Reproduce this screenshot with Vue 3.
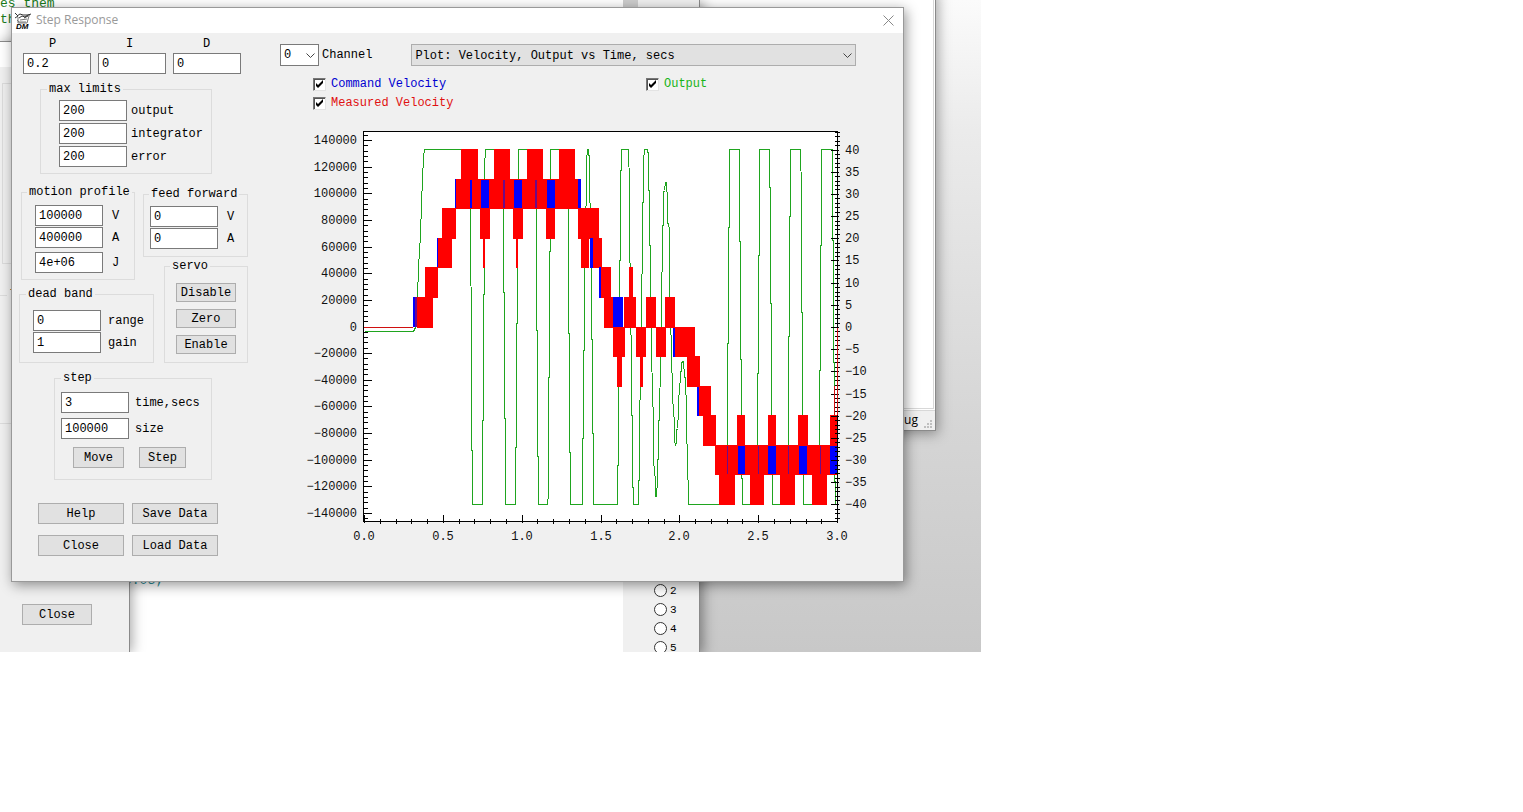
<script setup>
import { ref } from 'vue'

const gains = ref([
  { id: 'gain-p', label: 'P', value: '0.2' },
  { id: 'gain-i', label: 'I', value: '0' },
  { id: 'gain-d', label: 'D', value: '0' },
])
const limits = ref([
  { id: 'lim-out', label: 'output', value: '200' },
  { id: 'lim-int', label: 'integrator', value: '200' },
  { id: 'lim-err', label: 'error', value: '200' },
])
const profile = ref([
  { id: 'mp-v', label: 'V', value: '100000' },
  { id: 'mp-a', label: 'A', value: '400000' },
  { id: 'mp-j', label: 'J', value: '4e+06' },
])
const feed = ref([
  { id: 'ff-v', label: 'V', value: '0' },
  { id: 'ff-a', label: 'A', value: '0' },
])
const deadBand = ref([
  { id: 'db-range', label: 'range', value: '0' },
  { id: 'db-gain', label: 'gain', value: '1' },
])
const step = ref([
  { id: 'st-time', label: 'time,secs', value: '3' },
  { id: 'st-size', label: 'size', value: '100000' },
])
const traces = ref([
  { id: 'tr-cmd', label: 'Command Velocity', tone: 'blue', on: true },
  { id: 'tr-out', label: 'Output', tone: 'green', on: true },
  { id: 'tr-meas', label: 'Measured Velocity', tone: 'red', on: true },
])
const channels = [2, 3, 4, 5]

// Plot frame, in drawing units
const L = 363, R = 837, T = 131, B = 521
const velY = (v) => Math.round(326.5 - (v * 26.64) / 20000)
const outY = (v) => Math.round(327 - v * 4.436)
const timeX = (t) => Math.round(364 + t * 157.7)
const minus = (n) => String(n).replace('-', '−')

const leftTicks = []
for (let v = -144000; v <= 144000; v += 4000) {
  leftTicks.push({ y: velY(v), major: v % 20000 === 0, label: minus(v) })
}
const rightTicks = []
for (let v = -43; v <= 44; v++) {
  rightTicks.push({ y: outY(v), major: v % 5 === 0 && Math.abs(v) <= 40, label: minus(v) })
}
const bottomTicks = []
for (let i = 0; i <= 30; i++) {
  bottomTicks.push({ x: timeX(i / 10), major: i % 5 === 0, label: (i / 10).toFixed(1) })
}

// [x0, x1, y0, y1]
const measured = [
  [364, 413, 327, 328],
  [417, 433, 297, 328], [425, 438, 267, 298], [438, 452, 238, 268], [442, 456, 208, 239],
  [456, 581, 179, 209],
  [461, 478, 149, 179], [494, 510, 149, 179], [527, 543, 149, 179], [559, 575, 149, 179],
  [480, 490, 208, 239], [513, 523, 208, 239], [546, 555, 208, 239], [578, 599, 208, 239],
  [483, 485, 239, 268], [516, 518, 239, 268],
  [581, 589, 238, 268], [593, 602, 238, 268], [601, 611, 267, 298],
  [604, 613, 297, 328], [624, 636, 297, 328], [629, 633, 267, 297], [646, 656, 297, 328], [665, 675, 297, 328],
  [613, 625, 327, 357], [636, 646, 327, 357], [656, 666, 327, 357], [675, 695, 327, 357],
  [617, 622, 357, 387], [640, 643, 357, 387], [687, 700, 356, 387],
  [699, 711, 386, 416], [703, 716, 415, 446], [715, 837, 445, 475],
  [719, 735, 474, 505], [750, 764, 474, 505], [780, 795, 474, 505], [812, 827, 474, 505],
  [737, 745, 415, 445], [768, 776, 415, 445], [798, 808, 415, 445], [830, 837, 415, 445],
]
const command = [
  [413, 415, 297, 327], [437, 438, 238, 267], [455, 456, 179, 208],
  [470, 472, 180, 208], [481, 489, 180, 208], [514, 522, 180, 208], [547, 555, 180, 208], [578, 581, 179, 208],
  [590, 593, 238, 268], [599, 601, 267, 298], [613, 623, 297, 327], [673, 675, 328, 357], [697, 699, 387, 416],
  [738, 745, 446, 474], [768, 776, 446, 474], [799, 807, 446, 474], [830, 837, 446, 474],
]
const mixed = [
  [415, 417, 297, 327], [503, 505, 180, 208], [535, 537, 180, 208],
  [727, 728, 446, 474], [758, 759, 446, 474], [788, 789, 446, 474], [820, 821, 446, 474],
]
const output = [
  [364, 331], [413, 331], [415, 327], [417, 297], [418, 267], [420, 235], [421, 203], [422, 179], [423, 157], [424, 149],
  [470, 149], [470, 240], [471, 330], [471, 450], [472, 450], [472, 504], [482, 504], [482, 420], [483, 420], [483, 294], [484, 294], [484, 166], [485, 149],
  [503, 149], [503, 292], [504, 292], [504, 418], [505, 418], [505, 504], [515, 504], [515, 447], [516, 447], [516, 323], [517, 323], [518, 149],
  [536, 149], [536, 330], [537, 330], [537, 456], [538, 456], [538, 504], [547, 504], [548, 493], [548, 377], [549, 377], [549, 251], [550, 251], [550, 149],
  [568, 149], [568, 333], [569, 333], [569, 452], [570, 452], [570, 504], [582, 504], [582, 438], [583, 438], [583, 350], [584, 350], [584, 268], [585, 208],
  [586, 203], [586, 160], [587, 149], [588, 149], [588, 155], [589, 155], [589, 195], [590, 210], [591, 268], [591, 339], [592, 339], [592, 433], [593, 433], [593, 504],
  [617, 504], [617, 465], [618, 465], [618, 387], [619, 297], [619, 260], [620, 260], [620, 170], [621, 170], [621, 149], [628, 149], [629, 184], [629, 260],
  [630, 265], [630, 330], [631, 338], [631, 415], [632, 415], [632, 487], [633, 487], [633, 504], [638, 504], [638, 480], [639, 480], [639, 413], [640, 387],
  [641, 275], [642, 272], [642, 202], [643, 202], [643, 160], [644, 149], [647, 149], [648, 155], [648, 190], [649, 190], [649, 245], [650, 245], [650, 300],
  [651, 350], [652, 393], [653, 420], [653, 460], [655, 480], [655, 496], [656, 496], [657, 480], [657, 460], [658, 458], [658, 420], [659, 420], [660, 357],
  [661, 310], [661, 272], [662, 271], [662, 225], [663, 225], [663, 192], [664, 190], [665, 182], [666, 182], [666, 190], [667, 193], [667, 223], [668, 223],
  [669, 230], [669, 300], [670, 330], [671, 338], [671, 372], [672, 373], [672, 403], [673, 404], [674, 429], [674, 441], [675, 444], [676, 442], [676, 430],
  [677, 428], [678, 412], [678, 395], [679, 394], [680, 372], [681, 370], [681, 363], [682, 361], [683, 361], [684, 376], [685, 378], [686, 410], [686, 443], [687, 444],
  [687, 479], [688, 480], [688, 504], [727, 504], [727, 343], [728, 343], [728, 227], [729, 227], [729, 149], [739, 149], [739, 241], [740, 241], [740, 359],
  [741, 359], [741, 476], [742, 480], [742, 504], [757, 504], [757, 373], [758, 373], [758, 255], [759, 255], [759, 149], [769, 149], [769, 187], [770, 187],
  [770, 303], [771, 303], [771, 445], [772, 476], [772, 504], [788, 504], [788, 336], [789, 336], [789, 216], [790, 216], [790, 149], [800, 149], [801, 192],
  [801, 312], [802, 312], [802, 445], [803, 476], [803, 504], [819, 504], [819, 370], [820, 370], [820, 245], [821, 245], [821, 149], [832, 149], [832, 240],
  [833, 240], [833, 362], [834, 362], [834, 480], [835, 482], [835, 504],
].map((p) => p.join(',')).join(' ')
</script>

<template>
  <main class="desktop">
    <section class="win viewer" aria-label="Viewer">
      <div class="viewer-page"></div>
      <footer class="status">
        <span>Debug</span>
        <svg class="grip" viewBox="0 0 9 9" aria-hidden="true">
          <path d="M6 0h2v2H6zM3 3h2v2H3zM6 3h2v2H6zM0 6h2v2H0zM3 6h2v2H3zM6 6h2v2H6z" fill="#bfbfbf" />
        </svg>
      </footer>
    </section>

    <section class="win editor" aria-label="Editor">
      <div class="code">
        <p class="comment">es them</p>
        <p class="comment">th</p>
        <p class="value">0.03;</p>
      </div>
      <div class="side">
        <div class="scroll"></div>
        <div class="channels">
          <label v-for="c in channels" :key="c" class="radio">
            <input type="radio" name="axis" :value="c" />{{ c }}
          </label>
        </div>
      </div>
    </section>

    <section class="win tool" aria-label="Tool window">
      <div class="tool-title"></div>
      <div class="ghost ghost-a"></div>
      <div class="ghost ghost-b"><span>l</span></div>
      <button type="button" class="btn tool-close">Close</button>
    </section>

    <section class="win dialog" aria-label="Step Response">
      <header class="title">
        <svg class="app-icon" viewBox="0 0 16 16" aria-hidden="true">
          <g fill="none" stroke="#333">
            <path d="M0 0l3 3M0 5l3-2M2 3l3-2 3 1h7M4 5l3-2 3 1 3-2M9 5l4-2M13 2l3-1" />
            <path d="M3 4v6h9l2-7M5 7l7-1M4 9h7M2 7l2 2" stroke="#777" />
          </g>
          <text class="icon-text" x="1" y="16">DM</text>
        </svg>
        <h1>Step Response</h1>
        <button type="button" class="x" aria-label="Close window">
          <svg viewBox="0 0 11 11" aria-hidden="true"><path d="M.5.5l10 10M10.500.5l-10 10" stroke="#888" fill="none" /></svg>
        </button>
      </header>

      <div class="body">
        <div class="left">
          <div class="pid-labels">
            <label v-for="g in gains" :key="g.id" :for="g.id">{{ g.label }}</label>
          </div>
          <div class="pid-inputs">
            <input v-for="g in gains" :id="g.id" :key="g.id" v-model="g.value" type="text" />
          </div>

          <fieldset class="limits">
            <legend>max limits</legend>
            <div v-for="f in limits" :key="f.id" class="field">
              <input :id="f.id" v-model="f.value" type="text" /><label :for="f.id">{{ f.label }}</label>
            </div>
          </fieldset>

          <div class="pair">
            <fieldset class="profile">
              <legend>motion profile</legend>
              <div v-for="f in profile" :key="f.id" class="field">
                <input :id="f.id" v-model="f.value" type="text" /><label :for="f.id">{{ f.label }}</label>
              </div>
            </fieldset>
            <fieldset class="feed">
              <legend>feed forward</legend>
              <div v-for="f in feed" :key="f.id" class="field">
                <input :id="f.id" v-model="f.value" type="text" /><label :for="f.id">{{ f.label }}</label>
              </div>
            </fieldset>
          </div>

          <div class="pair lower">
            <fieldset class="dead">
              <legend>dead band</legend>
              <div v-for="f in deadBand" :key="f.id" class="field">
                <input :id="f.id" v-model="f.value" type="text" /><label :for="f.id">{{ f.label }}</label>
              </div>
            </fieldset>
            <fieldset class="servo">
              <legend>servo</legend>
              <button type="button" class="btn">Disable</button>
              <button type="button" class="btn">Zero</button>
              <button type="button" class="btn">Enable</button>
            </fieldset>
          </div>

          <fieldset class="step">
            <legend>step</legend>
            <div v-for="f in step" :key="f.id" class="field">
              <input :id="f.id" v-model="f.value" type="text" /><label :for="f.id">{{ f.label }}</label>
            </div>
            <div class="step-actions">
              <button type="button" class="btn">Move</button>
              <button type="button" class="btn">Step</button>
            </div>
          </fieldset>

          <div class="actions">
            <button type="button" class="btn">Help</button>
            <button type="button" class="btn">Save Data</button>
            <button type="button" class="btn">Close</button>
            <button type="button" class="btn">Load Data</button>
          </div>
        </div>

        <div class="right">
          <div class="pickers">
            <span class="combo channel">
              <select id="channel"><option>0</option><option>1</option></select>
              <svg viewBox="0 0 9 5" aria-hidden="true"><path d="M.5.5l4 4 4-4" fill="none" stroke="#444" /></svg>
            </span>
            <label for="channel">Channel</label>
            <span class="combo plot-kind">
              <select aria-label="Plot type"><option>Plot: Velocity, Output vs Time, secs</option></select>
              <svg viewBox="0 0 9 5" aria-hidden="true"><path d="M.5.5l4 4 4-4" fill="none" stroke="#444" /></svg>
            </span>
          </div>
          <div class="traces">
            <label v-for="t in traces" :key="t.id" :class="['trace', t.tone]">
              <span class="check">
                <input v-model="t.on" type="checkbox" />
                <svg v-if="t.on" viewBox="0 0 9 9" aria-hidden="true"><path d="M1 3v3l2 2 5-5V0L3 5z" fill="#000" /></svg>
              </span>
              {{ t.label }}
            </label>
          </div>

          <svg class="chart" viewBox="300 125 580 425" role="img" aria-label="Velocity and output against time">
            <rect :x="L" :y="T" :width="R - L" :height="B - T" fill="#fff" />
            <g shape-rendering="crispEdges">
              <g transform="translate(.5 .5)"><polyline :points="output" fill="none" stroke="#1fa51f" /></g>
              <g fill="#f00"><rect v-for="(m, i) in measured" :key="i" :x="m[0]" :y="m[2]" :width="m[1] - m[0]" :height="m[3] - m[2]" /></g>
              <g fill="#00f"><rect v-for="(m, i) in command" :key="i" :x="m[0]" :y="m[2]" :width="m[1] - m[0]" :height="m[3] - m[2]" /></g>
              <g fill="#6f0a86"><rect v-for="(m, i) in mixed" :key="i" :x="m[0]" :y="m[2]" :width="m[1] - m[0]" :height="m[3] - m[2]" /></g>
              <g fill="#000">
                <rect :x="L" :y="T" :width="R - L + 1" height="1" />
                <rect :x="L" :y="B" :width="R - L + 1" height="1" />
                <rect :x="L" :y="T" width="1" :height="B - T + 1" />
                <rect :x="R" :y="T" width="1" :height="B - T + 1" />
                <rect v-for="t in leftTicks" :key="t.y" :x="L" :y="t.y" :width="t.major ? 9 : 5" height="1" />
                <rect v-for="t in rightTicks" :key="t.y" :x="t.major ? R - 6 : R - 2" :y="t.y" :width="t.major ? 8 : 5" height="1" />
                <rect v-for="t in bottomTicks" :key="t.x" :x="t.x" :y="t.major ? B - 6 : B - 2" width="1" :height="t.major ? 8 : 5" />
              </g>
              <g fill="#d01010">
                <rect x="364" y="327" width="49" height="1" />
                <rect x="837" y="328" width="1" height="87" />
                <rect x="834" y="386" width="1" height="29" />
              </g>
            </g>
            <g class="axis">
              <template v-for="t in leftTicks" :key="t.y"><text v-if="t.major" x="357" :y="t.y + 4" text-anchor="end">{{ t.label }}</text></template>
              <template v-for="t in rightTicks" :key="t.y"><text v-if="t.major" x="845" :y="t.y + 4">{{ t.label }}</text></template>
              <template v-for="t in bottomTicks" :key="t.x"><text v-if="t.major" :x="t.x" y="540" text-anchor="middle">{{ t.label }}</text></template>
            </g>
          </svg>
        </div>
      </div>
    </section>
  </main>
</template>

<style>
body { margin: 0; background: #fff; }
</style>

<style scoped>
* { box-sizing: border-box; }
.desktop {
  position: relative;
  width: calc(100vw - 542px);
  height: calc(100vh - 160px);
  overflow: hidden;
  background: linear-gradient(#fbfbfb, #ebebeb 20%, #d5d5d5 66%, #c8c8c8);
  font: 12px/14px "Liberation Mono", monospace;
  color: #000;
}
button, input, select { font: inherit; color: inherit; margin: 0; }
.win { position: absolute; }

.viewer {
  top: -10px;
  right: 45px;
  width: 300px;
  height: 441px;
  display: flex;
  flex-direction: column;
  background: #fff;
  border: 1px solid #8a8a8a;
  box-shadow: 2px 3px 12px rgba(0, 0, 0, 0.35);
}
.viewer-page { flex: 1; margin-right: 1px; border-right: 1px solid #d8d8d8; border-bottom: 1px solid #d8d8d8; }
.status {
  height: 20px;
  margin-top: 1px;
  padding: 0 2px 1px 0;
  display: flex;
  justify-content: flex-end;
  align-items: flex-end;
  gap: 6px;
  background: #f0f0f0;
  border-top: 1px solid #d8d8d8;
  font: 12px/18px "Open Sans", sans-serif;
}
.grip { width: 9px; height: 9px; }

.editor {
  top: 0;
  bottom: 0;
  left: 0;
  right: 281px;
  display: flex;
  background: #fff;
  border-right: 1px solid #8a8a8a;
  box-shadow: 3px 3px 12px rgba(0, 0, 0, 0.4);
}
.code { flex: 1; font-size: 13px; line-height: 16px; }
.code p { margin: 0; white-space: pre; }
.code .comment { color: #1a7a1a; }
.code .comment:first-child { margin-top: -4px; }
.code .value { color: #2a8c96; margin: 545px 0 0 124px; }
.side { width: 76px; background: #f0f0f0; display: flex; flex-direction: column; justify-content: space-between; }
.scroll { width: 15px; height: 40px; background: #cdcdcd; }
.channels { display: flex; flex-direction: column; padding-left: 31px; margin-bottom: -5px; }
.radio { height: 19px; display: flex; align-items: center; gap: 3px; font-size: 11px; }
.radio input {
  appearance: none;
  width: 13px;
  height: 13px;
  border: 1px solid #333;
  border-radius: 50%;
  background: #fff;
}

.tool {
  top: 41px;
  left: -1px;
  bottom: -1px;
  width: 131px;
  background: #f0f0f0;
  border: 1px solid #8a8a8a;
  box-shadow: 2px 0 12px rgba(0, 0, 0, 0.35);
}
.tool-title { height: 25px; background: #fff; }
.ghost { border: 1px solid #dcdcdc; }
.ghost-a { margin: 16px 0 0 2px; height: 181px; }
.ghost-b { margin: 31px 0 0 -1px; height: 129px; }
.ghost-b span { display: block; width: 20px; margin: -8px 0 0 7px; padding-left: 2px; background: #f0f0f0; }
.tool-close { margin: 180px 0 0 22px; width: 70px; height: 23px; }

.dialog {
  top: 7px;
  left: 11px;
  right: 77px;
  background: #f0f0f0;
  border: 1px solid #999;
  box-shadow: 2px 3px 12px rgba(0, 0, 0, 0.42);
}
.title {
  height: 25px;
  display: flex;
  align-items: center;
  padding: 0 9px 0 3px;
  background: #fff;
  color: #999;
}
.app-icon { width: 16px; height: 16px; overflow: visible; }
.icon-text { font: italic bold 8px "Liberation Sans", sans-serif; fill: #000; }
h1 { flex: 1; margin: 0 0 2px 5px; font: 12px/16px "Open Sans", sans-serif; }
.x { padding: 0; border: 0; background: none; height: 11px; width: 11px; }
.x svg { display: block; width: 11px; height: 11px; }

.body { display: flex; }
.left { width: 268px; flex: none; padding: 4px 0 25px; }
.right { flex: 1; padding: 10px 23px 0 0; min-width: 0; }

.left input[type="text"] {
  width: 68px;
  height: 21px;
  padding: 0 3px;
  border: 1px solid #7a7a7a;
  border-radius: 0;
  background: #fff;
}
.btn {
  padding: 0;
  border: 1px solid #adadad;
  border-radius: 0;
  background: #e1e1e1;
  height: 21px;
}
.pid-labels { display: flex; padding-left: 2px; height: 16px; }
.pid-labels label { width: 77px; text-align: center; }
.pid-inputs { display: flex; gap: 7px; padding-left: 11px; }

fieldset { margin: 0; border: 1px solid #dcdcdc; min-width: 0; }
legend { padding: 0 2px; height: 14px; }
.field { display: flex; align-items: center; gap: 9px; white-space: nowrap; }
.field + .field { margin-top: 1px; }

.limits { width: 172px; margin: 8px 0 0 28px; padding: 4px 0 6px 18px; }
.limits legend { margin-left: -12px; }
.limits .field { gap: 4px; }
.limits .field + .field { margin-top: 2px; }

.pair { display: flex; align-items: flex-start; margin-top: 11px; padding-left: 9px; }
.profile { width: 114px; padding: 6px 0 6px 13px; }
.profile legend { margin-left: -8px; }
.profile .field:last-child { margin-top: 4px; }
.feed { width: 105px; margin: 2px 0 0 8px; padding: 5px 0 7px 6px; }
.feed legend { margin-left: -1px; }

.lower { align-items: flex-end; margin-top: -21px; padding-left: 7px; }
.dead { width: 135px; padding: 9px 0 9px 13px; }
.dead legend { margin-left: -7px; }
.dead .field { gap: 7px; }
.servo { width: 84px; margin-left: 10px; padding: 10px 11px 8px; display: grid; gap: 7px; }
.servo legend { margin-left: -6px; }
.servo .btn { height: 19px; }

.step { width: 158px; margin: 8px 0 0 42px; padding: 7px 0 11px 6px; }
.step .field { gap: 6px; }
.step .field + .field { margin-top: 5px; }
.step-actions { display: flex; gap: 15px; margin: 8px 0 0 12px; }
.step-actions .btn { width: 51px; }
.step-actions .btn + .btn { width: 47px; }

.actions { display: grid; grid-template-columns: 86px 86px; gap: 11px 8px; margin: 23px 0 0 26px; }

.pickers { display: flex; align-items: center; gap: 3px; }
.combo { position: relative; display: flex; height: 22px; }
.combo select {
  appearance: none;
  width: 100%;
  padding: 0 20px 0 3px;
  border: 1px solid #7a7a7a;
  border-radius: 0;
  background: #fff;
}
.combo svg { position: absolute; right: 4px; top: 9px; width: 9px; height: 5px; pointer-events: none; }
.channel { width: 39px; }
.plot-kind { flex: 1; margin: 1px 24px 0 36px; }
.plot-kind select { padding-top: 2px; border-color: #adadad; background: #e1e1e1; }

.traces { display: grid; grid-template-columns: 333px 1fr; padding: 10px 0 0 33px; row-gap: 3px; }
.trace { display: flex; align-items: center; gap: 5px; height: 16px; }
.check { position: relative; display: flex; }
.check input {
  appearance: none;
  width: 13px;
  height: 13px;
  background: #fff;
  border: 1px solid;
  border-color: #777 #e3e3e3 #e3e3e3 #777;
  box-shadow: inset 1px 1px #555;
}
.check svg { position: absolute; left: 2px; top: 2px; width: 9px; height: 9px; pointer-events: none; }
.blue { color: #0000d0; }
.red { color: #e01010; }
.green { color: #18b418; }

.chart { display: block; margin: 14px 0 0 20px; width: calc(100% - 20px); }
.axis { font: 12px "Liberation Mono", monospace; fill: #111; }
</style>
